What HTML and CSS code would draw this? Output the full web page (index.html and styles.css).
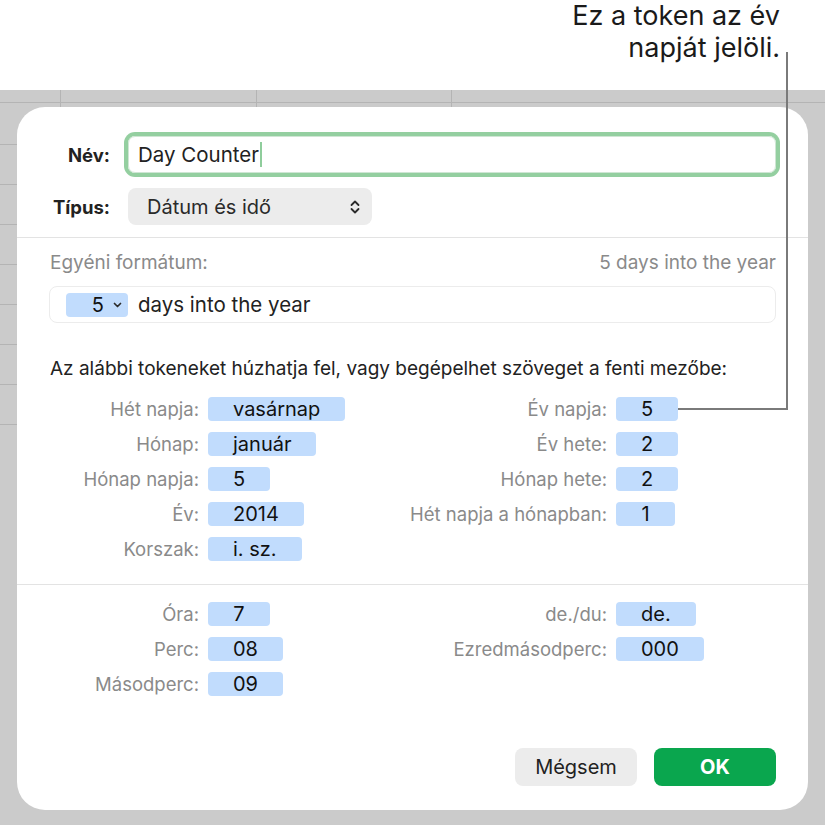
FILE: index.html
```html
<!DOCTYPE html>
<html lang="hu">

<head>
    <meta charset="UTF-8" />
    <meta name="viewport" content="width=device-width, initial-scale=1.0" />
    <title>Egyéni formátum</title>
    <link rel="stylesheet" href="styles.css">
</head>

<body>
    <div class="page">
        <!-- magyarázó felirat és a vonal a tokenig -->
        <p class="callout">Ez a token az év<br>napját jelöli.</p>
        <div class="leader"></div>

        <div class="sheet">
            <div class="dialog">
                <div class="head">
                    <label class="head-label">Név:</label>
                    <div class="name-field">Day Counter<span class="caret"></span></div>
                    <label class="head-label">Típus:</label>
                    <div class="popup">
                        <span>Dátum és idő</span>
                        <svg class="updown" width="10" height="16" viewBox="0 0 10 16">
                            <path d="M1.5 6 L5 2.5 L8.5 6 M1.5 10 L5 13.5 L8.5 10" fill="none" stroke="#2b2b2b" stroke-width="1.8" stroke-linecap="round" stroke-linejoin="round" />
                        </svg>
                    </div>
                </div>

                <div class="rule"></div>

                <div class="fmt-head">
                    <span>Egyéni formátum:</span>
                    <span>5 days into the year</span>
                </div>
                <div class="fmt-box">
                    <span class="tok tok-menu">5
                        <svg width="9" height="6" viewBox="0 0 9 6">
                            <path d="M1.5 1.5 L4.5 4.5 L7.5 1.5" fill="none" stroke="#2b2b2b" stroke-width="1.7" stroke-linecap="round" stroke-linejoin="round" />
                        </svg>
                    </span>
                    <span class="fmt-text">days into the year</span>
                </div>

                <p class="hint">Az alábbi tokeneket húzhatja fel, vagy begépelhet szöveget a fenti mezőbe:</p>

                <!-- dátum tokenek -->
                <div class="tokens date-tokens">
                    <span class="lbl">Hét napja:</span><span class="tok">vasárnap</span>
                    <span class="lbl">Év napja:</span><span class="tok">5</span>
                    <span class="lbl">Hónap:</span><span class="tok">január</span>
                    <span class="lbl">Év hete:</span><span class="tok">2</span>
                    <span class="lbl">Hónap napja:</span><span class="tok">5</span>
                    <span class="lbl">Hónap hete:</span><span class="tok">2</span>
                    <span class="lbl">Év:</span><span class="tok">2014</span>
                    <span class="lbl">Hét napja a hónapban:</span><span class="tok tok-narrow">1</span>
                    <span class="lbl">Korszak:</span><span class="tok">i. sz.</span>
                </div>

                <div class="rule rule-time"></div>

                <!-- idő tokenek -->
                <div class="tokens time-tokens">
                    <span class="lbl">Óra:</span><span class="tok">7</span>
                    <span class="lbl">de./du:</span><span class="tok">de.</span>
                    <span class="lbl">Perc:</span><span class="tok">08</span>
                    <span class="lbl">Ezredmásodperc:</span><span class="tok">000</span>
                    <span class="lbl">Másodperc:</span><span class="tok">09</span>
                </div>

                <div class="buttons">
                    <button class="btn btn-cancel">Mégsem</button>
                    <button class="btn btn-ok">OK</button>
                </div>
            </div>
        </div>
    </div>
</body>

</html>
```

FILE: styles.css
```css
* {
    box-sizing: border-box;
}

body {
    margin: 0;
    background: #fff;
    font-family: "Inter", "Noto Sans", sans-serif;
    color: #1f1f1f;
}

.page {
    position: relative;
    width: 825px;
    height: 827px;
}

.callout {
    margin: 0;
    height: 90px;
    padding-right: 45px;
    text-align: right;
    font-size: 27px;
    line-height: 32px;
    color: #1a1a1a;
}

/* vonal a felirattól az "Év napja" tokenig */
.leader {
    position: absolute;
    left: 678px;
    top: 52px;
    width: 110px;
    height: 358px;
    border-right: 2px solid #7a7a7a;
    border-bottom: 2px solid #7a7a7a;
}

/* táblázat háttér a párbeszédablak mögött */
.sheet {
    height: 735px;
    padding: 17px 17px 0 17px;
    background-color: #cbcbcb;
    background-image:
        linear-gradient(#b4b4b4, #b4b4b4),
        linear-gradient(#b4b4b4, #b4b4b4),
        linear-gradient(#b4b4b4, #b4b4b4),
        linear-gradient(#b4b4b4, #b4b4b4),
        repeating-linear-gradient(to bottom, transparent 0 39px, #b4b4b4 39px 40px);
    background-size: 100% 1px, 1px 17px, 1px 17px, 1px 17px, 17px 320px;
    background-position: 0 12px, 60px 0, 256px 0, 451px 0, 0 15px;
    background-repeat: no-repeat;
}

.dialog {
    width: 791px;
    height: 703px;
    background: #fff;
    border-radius: 28px;
    padding: 29px 32px 24px 33px;
    display: flex;
    flex-direction: column;
}

.head {
    display: grid;
    grid-template-columns: 60px 1fr;
    column-gap: 18px;
    row-gap: 15px;
    align-items: center;
}

.head-label {
    text-align: right;
    font-weight: 700;
    font-size: 18.5px;
    color: #222;
}

.name-field {
    height: 37px;
    border: 1px solid #cfe6d4;
    border-radius: 7px;
    box-shadow: 0 0 0 4px #94cfa0;
    padding-left: 9px;
    display: flex;
    align-items: center;
    font-size: 20.5px;
    color: #222;
}

.caret {
    width: 2px;
    height: 25px;
    margin-left: 1px;
    background: #8fcd9c;
}

.popup {
    width: 244px;
    height: 37px;
    border-radius: 8px;
    background: #ececec;
    padding: 0 12px 0 19px;
    display: flex;
    align-items: center;
    justify-content: space-between;
    font-size: 20px;
    color: #2a2a2a;
}

.rule {
    height: 1px;
    background: #e3e3e3;
    margin: 12px -32px 0 -33px;
}

.rule-time {
    margin-top: 23px;
}

.fmt-head {
    margin-top: 15px;
    display: flex;
    justify-content: space-between;
    font-size: 19px;
    line-height: 20px;
    color: #8a8a8a;
}

.fmt-box {
    margin: 13px 0 0 -1px;
    height: 37px;
    border: 1px solid #ececec;
    border-radius: 8px;
    padding-left: 16px;
    display: flex;
    align-items: center;
}

.fmt-text {
    margin-left: 10px;
    font-size: 20.5px;
    color: #222;
}

.hint {
    margin: 36px 0 0 0;
    font-size: 19px;
    line-height: 20px;
    color: #222;
}

.tokens {
    display: grid;
    grid-template-columns: 149px 190px 200px 1fr;
    grid-auto-rows: 24px;
    column-gap: 9px;
    row-gap: 11px;
    align-items: center;
}

.date-tokens {
    margin-top: 18px;
}

.time-tokens {
    margin-top: 17px;
}

.lbl {
    text-align: right;
    font-size: 18.5px;
    color: #8a8a8a;
    white-space: nowrap;
}

.tok {
    justify-self: start;
    min-width: 62px;
    height: 24px;
    padding: 0 25px;
    border-radius: 4px;
    background: #c1dcfd;
    text-align: center;
    font-size: 20px;
    line-height: 24px;
    color: #111;
}

.tok-narrow {
    min-width: 59px;
}

.tok-menu {
    display: flex;
    align-items: center;
    justify-content: flex-end;
    gap: 9px;
    padding: 0 6px 0 0;
}

.buttons {
    margin-top: auto;
    display: flex;
    justify-content: flex-end;
    gap: 17px;
}

.btn {
    width: 122px;
    height: 38px;
    border: none;
    border-radius: 8px;
    font-family: inherit;
    font-size: 20px;
    cursor: pointer;
}

.btn-cancel {
    background: #ececec;
    color: #222;
}

.btn-ok {
    background: #0aa64e;
    color: #fff;
    font-weight: 700;
}
```
